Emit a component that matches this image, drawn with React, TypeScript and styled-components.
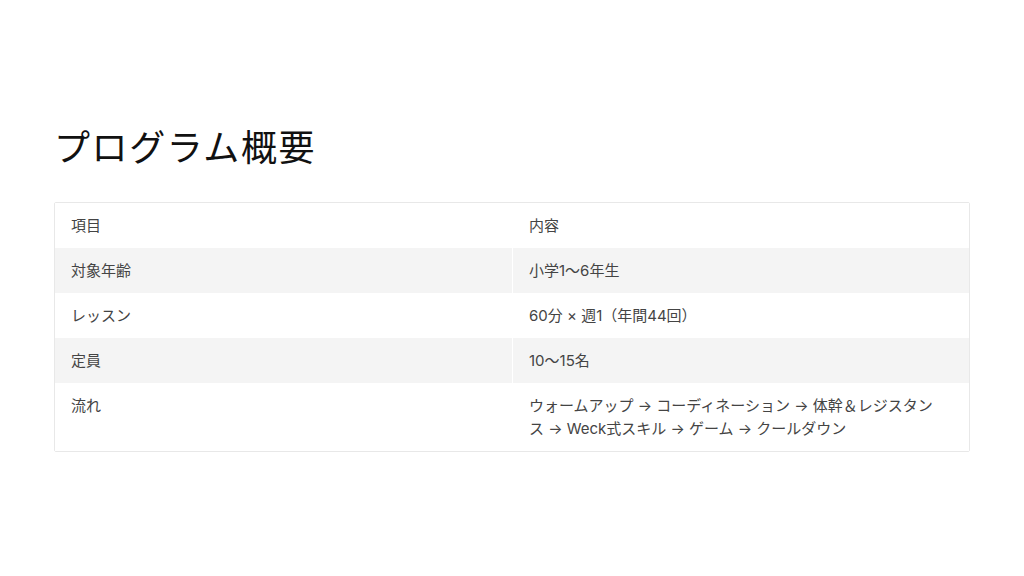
import * as React from 'react';
import styled, { createGlobalStyle } from 'styled-components';

const GlobalStyle = createGlobalStyle`
  html, body {
    margin: 0;
    padding: 0;
    background: #ffffff;
  }
  body {
    font-family: Inter, 'Noto Sans CJK JP', sans-serif;
    color: #444444;
  }
`;

const Page = styled.main`
  width: 916px;
  margin: 0 auto;
  padding-top: 121px;
`;

const Title = styled.h1`
  margin: 0 0 33px;
  font-family: 'Noto Sans CJK JP', sans-serif;
  font-size: 36px;
  font-weight: 400;
  line-height: 48px;
  letter-spacing: 1.6px;
  color: #111111;
`;

const Table = styled.table`
  width: 100%;
  border-collapse: separate;
  border-spacing: 0;
  border: 1px solid #e8e8e8;
  border-radius: 2px;
  table-layout: fixed;
`;

const Row = styled.tr<{ $striped?: boolean }>`
  background: ${(p) => (p.$striped ? '#f4f4f4' : '#ffffff')};
`;

const Cell = styled.td<{ $second?: boolean }>`
  padding: 11px 16px;
  font-size: 15px;
  line-height: 23px;
  vertical-align: top;
  text-align: left;
  color: #444444;
  border-left: ${(p) => (p.$second ? '1px solid #ffffff' : 'none')};
`;

const HeadCell = styled(Cell).attrs({ as: 'th' })`
  font-weight: 400;
`;

const rows: [string, React.ReactNode][] = [
  ['対象年齢', '小学1〜6年生'],
  ['レッスン', '60分 × 週1（年間44回）'],
  ['定員', '10〜15名'],
  [
    '流れ',
    <>
      ウォームアップ → コーディネーション → 体幹＆レジスタン
      <br />
      ス → Weck式スキル → ゲーム → クールダウン
    </>,
  ],
];

export default function App() {
  return (
    <>
      <GlobalStyle />
      <Page>
        <Title>プログラム概要</Title>
        <Table>
          <thead>
            <Row>
              <HeadCell>項目</HeadCell>
              <HeadCell $second>内容</HeadCell>
            </Row>
          </thead>
          <tbody>
            {rows.map(([label, value], i) => (
              <Row key={label} $striped={i % 2 === 0}>
                <Cell>{label}</Cell>
                <Cell $second>{value}</Cell>
              </Row>
            ))}
          </tbody>
        </Table>
      </Page>
    </>
  );
}
